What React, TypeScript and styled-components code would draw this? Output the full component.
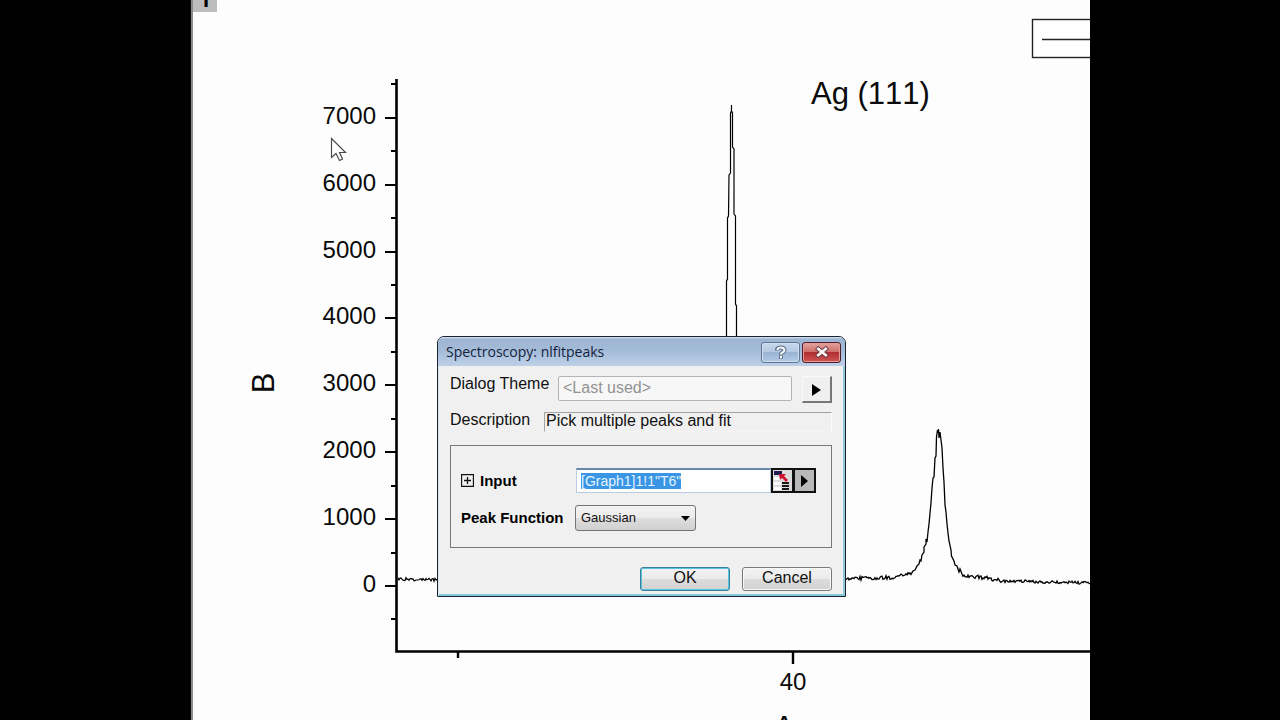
import React, { useEffect, useRef } from "react";
import styled, { createGlobalStyle } from "styled-components";

const GlobalStyle = createGlobalStyle`
  * { box-sizing: border-box; }
  body {
    margin: 0;
    background: #000;
    color: #111;
    font-family: "Liberation Sans", Arial, sans-serif;
    font-size: 16px;
  }
`;

const Screen = styled.main`
  display: flex;
  justify-content: center;
  height: 100vh;
  overflow: hidden;
  background: #000;
`;

const GraphWindow = styled.section`
  position: relative;
  width: 100%;
  max-width: 900px;
  overflow: hidden;
  background: #fdfdfd;
  border-left: 1px solid #111;
  box-shadow: inset 2px 0 0 #8a8a8a;
`;

const Chart = styled.svg`
  display: block;
  width: 900px;
  height: 720px;
  margin-left: -1px;
  font-kerning: none;
`;

const Dialog = styled.form`
  position: absolute;
  top: 336px;
  left: 246px;
  width: 409px;
  border: 1px solid #1b2430;
  border-radius: 7px 7px 0 0;
  background: #f0f0f0;
  box-shadow: inset 1px 0 0 #d4e6f0, inset -2px 0 0 #8fc6d8, inset 0 -2px 0 #7fccd8;
`;

const TitleBar = styled.header`
  display: flex;
  align-items: center;
  gap: 2px;
  height: 29px;
  padding: 1px 4px 0 8px;
  border-radius: 6px 6px 0 0;
  background: linear-gradient(#dbe7f3 0, #9db5d2 2px, #a5bcd9 14px, #bdd0e7 100%);
`;

const Title = styled.h1`
  flex: 1;
  margin: 0;
  color: #14233c;
  font: 400 14px/20px "Open Sans", "Noto Sans", sans-serif;
  font-variant-ligatures: none;
`;

const CaptionButton = styled.button<{ $danger?: boolean }>`
  display: grid;
  place-items: center;
  width: 39px;
  height: 21px;
  padding: 0;
  border: 1px solid ${(p) => (p.$danger ? "#4d1f2c" : "#5f7795")};
  border-radius: 3px;
  background: ${(p) =>
    p.$danger
      ? "linear-gradient(#e2a49f 0, #cf6f6c 45%, #b22e31 50%, #cf5553 100%)"
      : "linear-gradient(#c6d8ec 0, #b4cae3 45%, #9ab4d3 50%, #b3cae4 100%)"};
  box-shadow: inset 0 0 0 1px ${(p) => (p.$danger ? "#e59c96" : "#cfdff0")};
`;

const Body = styled.div`
  padding: 10px 13px 5px 12px;
`;

const Row = styled.div`
  display: flex;
  align-items: flex-start;
`;

const Label = styled.label<{ $width: number }>`
  width: ${(p) => p.$width}px;
  line-height: 16px;
  white-space: nowrap;
`;

const ThemeInput = styled.input`
  flex: 1;
  min-width: 0;
  height: 25px;
  padding: 0 4px 2px;
  border: 1px solid #b4b4b4;
  border-radius: 2px;
  background: #f7f7f7;
  color: #929292;
  font: inherit;
`;

const ThemeButton = styled.button`
  display: grid;
  place-items: center;
  width: 30px;
  height: 27px;
  margin-left: 10px;
  padding: 2px 0 0;
  border: solid;
  border-width: 1px 2px 2px 1px;
  border-color: #fafafa #777 #777 #fafafa;
  background: #f0f0f0;
`;

const DescriptionRow = styled(Row)`
  margin-top: 9px;
`;

const DescriptionField = styled.input`
  flex: 1;
  min-width: 0;
  height: 20px;
  padding: 0 0 2px 1px;
  border: solid;
  border-width: 1px;
  border-color: #a2a2a2 #fafafa #f4f4f4 #a2a2a2;
  background: #f0f0f0;
  color: #111;
  font: inherit;
`;

const Options = styled.fieldset`
  min-width: 0;
  margin: 13px 0 0;
  padding: 22px 15px 17px 10px;
  border: 1px solid #787878;
`;

const OptionRow = styled.div`
  display: flex;
  align-items: center;
  height: 25px;

  & + & {
    margin-top: 12px;
  }
`;

const OptionLabel = styled.label<{ $width: number }>`
  width: ${(p) => p.$width}px;
  color: #000;
  font-size: 15px;
  font-weight: 700;
  white-space: nowrap;
`;

const Expander = styled.button`
  width: 13px;
  height: 13px;
  margin-right: 6px;
  padding: 0;
  border: 0;
  background: none;

  svg { display: block; }
`;

const RangeInput = styled.input`
  flex: 1;
  min-width: 0;
  height: 25px;
  padding: 0 4px;
  border: 1px solid #b9cde2;
  border-top: 2px solid #6489ad;
  outline: 0;
  background: #fff;
  color: #111;
  font: inherit;
  font-size: 14px;

  &::selection {
    background: #3a96e4;
    color: #e4f4ff;
  }
`;

const RangeButton = styled.button`
  display: grid;
  place-items: center;
  width: 23px;
  height: 25px;
  padding: 0;
  border: 2px solid #111;
  background: #b8b8b8;

  & + & {
    margin-left: -1px;
  }
`;

const SelectBox = styled.div`
  position: relative;
  width: 121px;

  svg {
    position: absolute;
    top: 11px;
    right: 6px;
    pointer-events: none;
  }
`;

const Select = styled.select`
  display: block;
  width: 100%;
  height: 26px;
  padding: 0 20px 0 5px;
  border: 1px solid #757575;
  border-radius: 3px;
  appearance: none;
  background: linear-gradient(#f3f3f3 0, #ebebeb 50%, #dddddd 52%, #d0d0d0 100%);
  color: #111;
  font: inherit;
  font-size: 13px;
`;

const Actions = styled.footer`
  display: flex;
  justify-content: flex-end;
  gap: 12px;
  margin-top: 19px;
`;

const ActionButton = styled.button<{ $primary?: boolean }>`
  width: 90px;
  height: 24px;
  padding: 0 0 2px;
  border: 1px solid ${(p) => (p.$primary ? "#3a7f98" : "#7a7a7a")};
  border-radius: 3px;
  background: linear-gradient(#f3f3f3 0, #ebebeb 48%, #dcdcdc 52%, #d2d2d2 100%);
  box-shadow: inset 0 0 0 1px ${(p) => (p.$primary ? "#56c4e2" : "#f8f8f8")};
  color: #111;
  font: inherit;
  line-height: 20px;
`;

const ZERO_Y = 586;
const STEP_Y = 66.9;
const majorTicks = [7000, 6000, 5000, 4000, 3000, 2000, 1000, 0];
const tickY = (value: number) => Math.round(ZERO_Y - (value / 1000) * STEP_Y);
const minorTicks = [7500, 6500, 5500, 4500, 3500, 2500, 1500, 500, -500];

function noisy(from: number, to: number, y0: number, y1: number, amplitude: number) {
  const points: string[] = [];
  let seed = from * 7919;
  for (let x = from; x <= to; x += 1) {
    seed = (seed * 1103515245 + 12345) % 2147483648;
    const base = y0 + ((y1 - y0) * (x - from)) / (to - from);
    points.push(`${x},${(base + (seed / 2147483648 - 0.5) * amplitude * 2).toFixed(1)}`);
  }
  return points.join(" ");
}

const firstPeak =
  "726.5,340 726.5,281 727.5,279 727.5,218 728.5,216 729,175 730.5,173 730.5,113 731.5,111 731.5,105 731.5,111 732.5,113 732.5,147 734,149 734,214 735.5,216 735.5,304 736.5,306 736.5,340";
const secondPeak = [
  noisy(846, 896, 579, 577, 2),
  noisy(897, 911, 576, 573, 1.5),
  "913,571 915,570 917,566 919,564 920,560 921,561 922,555 924,552 924,547 926,544 926,539 927,542 928,532 929,524 930,513 931,503 932,488 933,478 934,477 935,458 936,456 936.5,437 937.5,430 938,433 938.5,429 939,438 940,432 941,440 942,448 943,468 944,482 945,505 946,512 947,524 948,533 949,541 951,550 951.5,556 954,561 955,565 957,566 959,572 960,569 962,574",
  noisy(963, 1000, 575, 580, 2),
  noisy(1001, 1092, 581, 583, 1.5),
].join(" ");

function Diffractogram() {
  return (
    <Chart viewBox="190 0 900 720" role="img" aria-label="Diffraction pattern">
      <rect x="193" y="0" width="24" height="12" fill="#bdbdbd" />
      <text x="199" y="7" fontFamily="Roboto, sans-serif" fontSize="22" fontWeight="700">1</text>

      <rect x="1032.5" y="19.5" width="80" height="38" fill="#fff" stroke="#222" strokeWidth="1.4" />
      <path d="M1042 39.5H1092" stroke="#222" strokeWidth="1.4" />

      <g stroke="#000" fill="none">
        <path d="M396.5 79V651.5H1092" strokeWidth="2.6" />
        <path d={majorTicks.map((v) => `M385 ${tickY(v)}H396`).join("")} strokeWidth="2" />
        <path d={minorTicks.map((v) => `M391 ${tickY(v)}H396`).join("")} strokeWidth="2" />
        <path d="M458 652V658M793 652V664" strokeWidth="2.4" />
        <polyline points={noisy(398, 440, 579, 580, 1.5)} strokeWidth="1.2" />
        <polyline points={firstPeak} strokeWidth="1.2" />
        <polyline points={secondPeak} strokeWidth="1.3" />
      </g>

      <g fontSize="24" fill="#0a0a0a">
        {majorTicks.map((v) => (
          <text key={v} x="376" y={tickY(v) + 6} textAnchor="end">{v}</text>
        ))}
        <text x="793" y="690" textAnchor="middle">40</text>
      </g>
      <g fontSize="31" fill="#0a0a0a">
        <text x="811" y="104">Ag (111)</text>
        <text transform="translate(274 383) rotate(-90)" textAnchor="middle">B</text>
        <text x="784" y="738" textAnchor="middle">A</text>
      </g>

      <path
        d="M331.5 138.5V157.5L336 153.5L339.5 160.5L342.5 159L339.5 152.5H345.5Z"
        fill="#fff"
        stroke="#4a4a4a"
        strokeWidth="1.2"
      />
    </Chart>
  );
}

function Triangle({ width, height }: { width: number; height: number }) {
  return (
    <svg width={width} height={height} viewBox="0 0 9 12" preserveAspectRatio="none" aria-hidden="true">
      <path d="M0 0L9 6L0 12Z" fill="#000" />
    </svg>
  );
}

export default function App() {
  const range = useRef<HTMLInputElement>(null);

  useEffect(() => {
    range.current?.focus();
    range.current?.select();
  }, []);

  return (
    <Screen>
      <GlobalStyle />
      <GraphWindow>
        <Diffractogram />
        <Dialog onSubmit={(e) => e.preventDefault()}>
          <TitleBar>
            <Title>Spectroscopy: nlfitpeaks</Title>
            <CaptionButton type="button" aria-label="Help">
              <svg width="14" height="15" viewBox="0 0 14 15" fill="none" aria-hidden="true">
                <path d="M3 5.5V4.5Q3.5 2.5 7 2.5T10.5 5Q10.5 6.5 8.8 7.2T7 10M7 10.5V14" stroke="#5a6c86" strokeWidth="4" />
                <path d="M3.5 5V4.5Q4 2.5 7 2.5T10.5 5Q10.5 6.5 8.8 7.2T7 9.6M7 11V13.4" stroke="#f1f5fa" strokeWidth="2.2" />
              </svg>
            </CaptionButton>
            <CaptionButton type="button" $danger aria-label="Close">
              <svg width="14" height="12" viewBox="0 0 14 12" fill="none" aria-hidden="true">
                <path d="M1.5 1.5L12.5 10.5M12.5 1.5L1.5 10.5" stroke="#673744" strokeWidth="4.6" />
                <path d="M2.2 2L11.8 10M11.8 2L2.2 10" stroke="#f7f3f3" strokeWidth="2.8" />
              </svg>
            </CaptionButton>
          </TitleBar>
          <Body>
            <Row>
              <Label $width={108} htmlFor="theme">Dialog Theme</Label>
              <ThemeInput id="theme" readOnly value="<Last used>" />
              <ThemeButton type="button" aria-label="Theme menu">
                <Triangle width={9} height={12} />
              </ThemeButton>
            </Row>
            <DescriptionRow>
              <Label $width={94} htmlFor="description">Description</Label>
              <DescriptionField id="description" readOnly value="Pick multiple peaks and fit" />
            </DescriptionRow>
            <Options>
              <OptionRow>
                <Expander type="button" aria-label="Expand input">
                  <svg width="13" height="13" viewBox="0 0 13 13" fill="none" aria-hidden="true">
                    <path d="M.5.5H12.5V12.5H.5ZM3 6.5H10M6.5 3V10" stroke="#111" strokeWidth="1.3" />
                  </svg>
                </Expander>
                <OptionLabel $width={96} htmlFor="range">Input</OptionLabel>
                <RangeInput id="range" ref={range} defaultValue={'[Graph1]1!1"T6"'} />
                <RangeButton type="button" aria-label="Select range">
                  <svg width="19" height="21" viewBox="0 0 19 21" aria-hidden="true">
                    <path d="M0 0H19V21H0Z" fill="#dcdcdc" />
                    <path d="M1 1H9V5H1Z" fill="#1c1f4d" />
                    <path d="M1 7H8V10H1ZM1 12H8V15H1ZM1 17H8V20H1Z" fill="#fff" />
                    <path d="M9 12H16V14H9ZM9 15H16V17H9ZM9 18H16V20H9Z" fill="#181818" />
                    <path d="M6 4L13 4L11 6L15 10L13 12L9 8L7 10Z" fill="#d01030" />
                  </svg>
                </RangeButton>
                <RangeButton type="button" aria-label="Range menu">
                  <Triangle width={7} height={12} />
                </RangeButton>
              </OptionRow>
              <OptionRow>
                <OptionLabel $width={114} htmlFor="peak">Peak Function</OptionLabel>
                <SelectBox>
                  <Select id="peak" defaultValue="Gaussian">
                    <option>Gaussian</option>
                    <option>Lorentz</option>
                  </Select>
                  <svg width="9" height="5" viewBox="0 0 9 5" aria-hidden="true">
                    <path d="M0 0H9L4.5 5Z" fill="#000" />
                  </svg>
                </SelectBox>
              </OptionRow>
            </Options>
            <Actions>
              <ActionButton type="submit" $primary>OK</ActionButton>
              <ActionButton type="button">Cancel</ActionButton>
            </Actions>
          </Body>
        </Dialog>
      </GraphWindow>
    </Screen>
  );
}
